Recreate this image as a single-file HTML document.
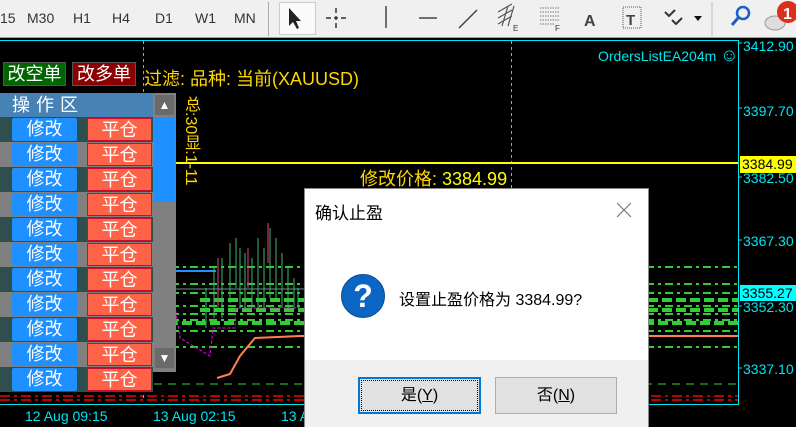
<!DOCTYPE html>
<html><head><meta charset="utf-8"><style>
*{margin:0;padding:0;box-sizing:border-box}
body{width:796px;height:427px;overflow:hidden;background:#000;position:relative;font-family:"Liberation Sans","Noto Sans CJK SC",sans-serif}
.a{position:absolute}
.tb{left:0;top:0;width:796px;height:38px;background:#f0f0f0;border-bottom:1px solid #a0a0a0}
.tf{top:10px;font-size:14px;color:#333}
.cy{color:#00e5ee}
.ax{font-size:14px;color:#00e5ee;left:743px}
.btn{font-size:18px;color:#fff;text-align:center;line-height:22px;height:23px}
.m{left:12px;width:65px;background:#1e90ff;border-radius:2px}
.p{left:87px;width:65px;background:#ff6347;border:1px solid #c8102e}
</style></head><body>
<div class="a tb"></div>
<div class="a tf" style="left:0">15</div>
<div class="a tf" style="left:27px">M30</div>
<div class="a tf" style="left:73px">H1</div>
<div class="a tf" style="left:112px">H4</div>
<div class="a tf" style="left:155px">D1</div>
<div class="a tf" style="left:195px">W1</div>
<div class="a tf" style="left:234px">MN</div>
<div class="a" style="left:268px;top:2px;width:1px;height:34px;background:#aaa"></div>
<div class="a" style="left:279px;top:2px;width:37px;height:33px;background:#fafafa;border:1px solid #ccc"></div>
<svg class="a" style="left:0;top:0" width="796" height="38">
<path d="M289 8 L289 26 L293 22 L297 29 L299 28 L296 21 L301 21 Z" fill="#222"/>
<path d="M326 18h20M336 8v20" stroke="#333" stroke-width="1.5" fill="none"/>
<path d="M331 18h3M338 18h3M336 13v3M336 20v3" stroke="#f0f0f0" stroke-width="2"/>
<path d="M386 6v22" stroke="#444" stroke-width="1.5"/>
<path d="M419 18h18M459 28l18-18" stroke="#444" stroke-width="1.5"/>
<path d="M498 12l14-8M498 18l14-8M498 24l14-8M502 26l6-20M508 26l6-20" stroke="#555" stroke-width="1.2"/>
<text x="513" y="31" font-size="8" fill="#333">E</text>
<path d="M540 8h20M540 12h20M540 16h20M540 20h20M540 24h14" stroke="#777" stroke-width="1" stroke-dasharray="1.5 1"/>
<text x="555" y="31" font-size="8" fill="#333">F</text>
<text x="584" y="26" font-size="16" font-weight="bold" fill="#444">A</text>
<rect x="623" y="7" width="18" height="21" fill="none" stroke="#555" stroke-dasharray="1 1"/>
<text x="626" y="25" font-size="15" font-weight="bold" fill="#444">T</text>
<path d="M665 12l4 4 6-6M672 20l4 4 6-6" stroke="#333" stroke-width="2" fill="none"/>
<path d="M694 16h8l-4 5z" fill="#111"/>
<path d="M712 2v34" stroke="#bbb"/>
<circle cx="743" cy="13" r="6" fill="none" stroke="#1a5fc8" stroke-width="2.5"/>
<path d="M738 18l-6 7" stroke="#1a5fc8" stroke-width="3"/>
<ellipse cx="775" cy="23" rx="10" ry="7" fill="#ddd" stroke="#999"/>
<circle cx="788" cy="12" r="11" fill="#d8301a"/>
<text x="783" y="19" font-size="16" font-weight="bold" fill="#fff">1</text>
</svg>
<svg class="a" style="left:0;top:38px" width="796" height="389">
<path d="M0 2.5h738" stroke="#00e5ee"/>
<path d="M738.5 2v365M0 366.5h738" stroke="#00e5ee"/>
<path d="M143.5 3v360M511.5 3v360" stroke="#00e5ee" stroke-dasharray="3 3"/>
<path d="M738 5h4M738 70h4M738 139h4M738 202h4M738 268h4M738 330h4" stroke="#00e5ee"/>
<g stroke="#32cd32" stroke-width="2" stroke-dasharray="8 4 3 4">
<path d="M0 229h738M0 246h738M0 255h738M0 268h738M0 276h738M0 282h738M0 293h738M0 309h738"/>
</g>
<g stroke="#32cd32" stroke-width="4" stroke-dasharray="10 4">
<path d="M200 262h538M200 272h538M0 285h738"/>
</g>
<path d="M0 346h738" stroke="#32cd32" stroke-dasharray="8 6"/>
<path d="M0 358h738M0 362h738" stroke="#f00" stroke-width="1.5" stroke-dasharray="10 4 3 4"/>
<path d="M160 251h210" stroke="#778899"/>
<path d="M152 233h64" stroke="#1e90ff" stroke-width="2"/>
<path d="M152 228 L170 240 175 268 180 300 210 318 213 290 235 290 236 270 300 270" stroke="#f0f" fill="none" stroke-dasharray="3 2"/>
<path d="M217 340 L230 336 240 318 255 300 300 298 738 298" stroke="#ff7f50" stroke-width="2" fill="none"/>
<g stroke="#3cb371" stroke-width="1">
<path d="M230 205v60M236 200v50M240 210v60M245 215v55M252 220v50M258 200v70M264 210v60M270 190v70M276 200v60M282 215v55M288 230v40M294 240v30M298 250v20M214 230v50M222 220v60M206 250v40"/>
</g>
<g stroke="#e0408a"><path d="M218 220v50M268 185v40M248 210v40"/></g>
<path d="M0 125h738" stroke="#ff0" stroke-width="2"/>
</svg>
<div class="a" style="left:740px;top:156px;width:56px;height:17px;background:#ff0;font-size:14px;color:#000;padding-left:2px;line-height:17px">3384.99</div>
<div class="a" style="left:740px;top:285px;width:56px;height:16px;background:#00ffff;font-size:14px;color:#000;padding-left:2px;line-height:16px">3355.27</div>
<div class="a ax" style="top:38px">3412.90</div>
<div class="a ax" style="top:103px">3397.70</div>
<div class="a ax" style="top:170px">3382.50</div>
<div class="a ax" style="top:233px">3367.30</div>
<div class="a ax" style="top:299px">3352.30</div>
<div class="a ax" style="top:361px">3337.10</div>
<div class="a cy" style="left:25px;top:408px;font-size:14px">12 Aug 09:15</div>
<div class="a cy" style="left:153px;top:408px;font-size:14px">13 Aug 02:15</div>
<div class="a cy" style="left:281px;top:408px;font-size:14px">13 A</div>
<div class="a cy" style="left:598px;top:45px;font-size:14px">OrdersListEA204m <span style="font-size:18px">☺</span></div>
<div class="a" style="left:144px;top:65px;font-size:18px;color:#ffd700">过滤: 品种: 当前(XAUUSD)</div>
<div class="a" style="left:360px;top:165px;font-size:18px;color:#ffd700">修改价格: <span style="color:#ff0">3384.99</span></div>
<div class="a btn" style="left:3px;top:62px;width:63px;height:24px;background:#006400;border:1px solid #555">改空单</div>
<div class="a btn" style="left:72px;top:62px;width:64px;height:24px;background:#8b0000;border:1px solid #555">改多单</div>
<div class="a" style="left:0;top:93px;width:153px;height:24px;background:#4682b4;color:#fff;font-size:18px;line-height:24px;padding-left:12px;letter-spacing:6px">操作区</div>
<div class="a" style="left:153px;top:93px;width:23px;height:279px;background:#808080"></div>
<div class="a" style="left:155px;top:95px;width:19px;height:20px;background:#6a6a6a;color:#fff;font-size:12px;text-align:center;line-height:20px">▲</div>
<div class="a" style="left:154px;top:117px;width:21px;height:85px;background:#1e90ff"></div>
<div class="a" style="left:155px;top:348px;width:19px;height:20px;background:#6a6a6a;color:#fff;font-size:12px;text-align:center;line-height:20px">▼</div>
<div class="a" style="left:0;top:117px;width:153px;height:275px;background:repeating-linear-gradient(#2f4f4f 0 25px,#808080 25px 50px)"></div>
<div class="a m btn" style="top:118px">修改</div><div class="a p btn" style="top:118px">平仓</div>
<div class="a m btn" style="top:143px">修改</div><div class="a p btn" style="top:143px">平仓</div>
<div class="a m btn" style="top:168px">修改</div><div class="a p btn" style="top:168px">平仓</div>
<div class="a m btn" style="top:193px">修改</div><div class="a p btn" style="top:193px">平仓</div>
<div class="a m btn" style="top:218px">修改</div><div class="a p btn" style="top:218px">平仓</div>
<div class="a m btn" style="top:243px">修改</div><div class="a p btn" style="top:243px">平仓</div>
<div class="a m btn" style="top:268px">修改</div><div class="a p btn" style="top:268px">平仓</div>
<div class="a m btn" style="top:293px">修改</div><div class="a p btn" style="top:293px">平仓</div>
<div class="a m btn" style="top:318px">修改</div><div class="a p btn" style="top:318px">平仓</div>
<div class="a m btn" style="top:343px">修改</div><div class="a p btn" style="top:343px">平仓</div>
<div class="a m btn" style="top:368px">修改</div><div class="a p btn" style="top:368px">平仓</div>
<div class="a" style="left:178px;top:96px;writing-mode:vertical-rl;font-size:16px;color:#ffd700">总:30显:1-11</div>
<div class="a" style="left:304px;top:188px;width:345px;height:239px;background:#fff;border:1px solid #888"></div>
<div class="a" style="left:305px;top:360px;width:343px;height:67px;background:#f0f0f0"></div>
<div class="a" style="left:315px;top:199px;font-size:17px;color:#000">确认止盈</div>
<svg class="a" style="left:616px;top:202px" width="16" height="16"><path d="M1 1L15 15M15 1L1 15" stroke="#777" stroke-width="1.2"/></svg>
<div class="a" style="left:341px;top:274px;width:44px;height:44px;border-radius:50%;background:#0a66c2;border:1px solid #0a4a90;color:#fff;font-size:32px;font-weight:bold;text-align:center;line-height:42px">?</div>
<div class="a" style="left:399px;top:286px;font-size:16px;color:#000">设置止盈价格为 3384.99?</div>
<div class="a" style="left:358px;top:377px;width:123px;height:37px;background:#e1e1e1;border:2px solid #0078d7;font-size:16px;text-align:center;line-height:33px;outline:1px dotted #000;outline-offset:-4px">是(<u>Y</u>)</div>
<div class="a" style="left:495px;top:377px;width:122px;height:37px;background:#e1e1e1;border:1px solid #adadad;font-size:16px;text-align:center;line-height:35px">否(<u>N</u>)</div>
</body></html>
